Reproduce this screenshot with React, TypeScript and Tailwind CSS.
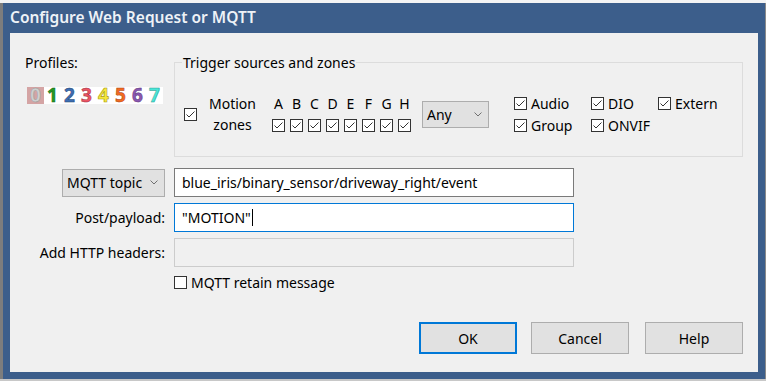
import React from "react";

function Check({ checked = true }: { checked?: boolean }) {
  return (
    <span className="flex h-[13px] w-[13px] shrink-0 items-center justify-center border border-[#333333] bg-white">
      {checked && (
        <svg width="11" height="11" viewBox="0 0 11 11" fill="none">
          <path d="M1.5 5.5 L4 8 L9.5 2.5" stroke="#333333" strokeWidth="1" />
        </svg>
      )}
    </span>
  );
}

function Chevron() {
  return (
    <svg width="8" height="5" viewBox="0 0 8 5" fill="none">
      <path d="M0.5 0.5 L4 4 L7.5 0.5" stroke="#707070" strokeWidth="1" />
    </svg>
  );
}

const zones = ["A", "B", "C", "D", "E", "F", "G", "H"];

const digits = [
  { d: "1", c: "text-[#239a23] [-webkit-text-stroke:0.5px_#16601a]" },
  { d: "2", c: "text-[#3d6db3] [-webkit-text-stroke:0.5px_#24456f]" },
  { d: "3", c: "text-[#ec5564] [-webkit-text-stroke:0.5px_#a03040]" },
  { d: "4", c: "text-[#f6e83c] [-webkit-text-stroke:0.6px_#a89a18]" },
  { d: "5", c: "text-[#f26a22] [-webkit-text-stroke:0.5px_#a84412]" },
  { d: "6", c: "text-[#8a58b0] [-webkit-text-stroke:0.5px_#5a3478]" },
  { d: "7", c: "text-[#4ae6d8] [-webkit-text-stroke:0.5px_#2a9a8e]" },
];

const sources = [
  ["Audio", "DIO", "Extern"],
  ["Group", "ONVIF"],
];

export default function App() {
  return (
    <div className="flex h-[381px] w-[766px] flex-col bg-[#f4f4f4] font-['Noto_Sans',sans-serif] text-[14px] text-black">
      <div className="h-[3px] shrink-0 bg-[#f4f4f4]" />
      <div className="flex flex-1">
        <div className="w-[3px] bg-[#7d7d7d]" />
        <div className="flex w-[762px] flex-col bg-[#3c5e8b] pb-[7px] pl-[7px] pr-[7px]">
          <div className="flex h-[30px] items-center text-[15.5px] font-semibold text-[#eef2f7]">
            Configure Web Request or MQTT
          </div>
          <div className="flex flex-1 flex-col bg-[#f0f0f0] pt-[20px]">
            {/* top row */}
            <div className="flex pl-[15px]">
              <div className="w-[149px]">
                <div className="leading-[19px]">Profiles:</div>
                <div className="ml-[2px] mt-[15px] flex h-[17px] w-[136px] bg-white text-[19px] font-bold leading-[17px]">
                  <span className="flex w-[17px] justify-center bg-[#d4a4a4] text-[#cfcfcf] [-webkit-text-stroke:0.5px_#999999]">
                    0
                  </span>
                  {digits.map((x) => (
                    <span key={x.d} className={"flex w-[17px] justify-center " + x.c}>
                      {x.d}
                    </span>
                  ))}
                </div>
              </div>

              <fieldset className="m-0 w-[569px] border border-[#dcdcdc] p-0">
                <legend className="ml-[7px] px-[1px] leading-[19px]">Trigger sources and zones</legend>
                <div className="flex h-[84px] items-center pl-[9px]">
                  <Check />
                  <div className="ml-[6px] w-[59px] text-center leading-[21px]">
                    Motion
                    <br />
                    zones
                  </div>
                  <div className="ml-[10px] flex gap-[5px]">
                    {zones.map((z) => (
                      <div key={z} className="flex w-[13px] flex-col items-center">
                        <span className="h-[16px] leading-[16px]">{z}</span>
                        <span className="mt-[7px]">
                          <Check />
                        </span>
                      </div>
                    ))}
                  </div>
                  <div className="ml-[11px] flex h-[27px] w-[67px] items-center justify-between border border-[#adadad] bg-[#e1e1e1] pl-[4px] pr-[6px]">
                    <span>Any</span>
                    <Chevron />
                  </div>
                  <div className="ml-[25px] grid grid-cols-[77px_67px_auto]">
                    {sources.map((row) =>
                      row.map((s) => (
                        <div key={s} className="flex h-[22px] items-center gap-[4px]">
                          <Check />
                          <span>{s}</span>
                        </div>
                      ))
                    )}
                  </div>
                </div>
              </fieldset>
            </div>

            {/* request rows */}
            <div className="mt-[11px] flex flex-col gap-[6px]">
              <div className="flex items-center">
                <div className="flex w-[155px] justify-end">
                  <div className="flex h-[28px] w-[103px] items-center justify-between border border-[#adadad] bg-[#e1e1e1] pl-[4px] pr-[6px]">
                    <span>MQTT topic</span>
                    <Chevron />
                  </div>
                </div>
                <div className="ml-[9px] flex h-[29px] w-[400px] items-center border border-[#7a7a7a] bg-white px-[7px]">
                  blue_iris/binary_sensor/driveway_right/event
                </div>
              </div>
              <div className="flex items-center">
                <div className="w-[155px] text-right">Post/payload:</div>
                <div className="ml-[9px] flex h-[29px] w-[400px] items-center border border-[#0078d7] bg-white px-[7px]">
                  "MOTION"
                  <span className="ml-px inline-block h-[17px] w-px bg-black" />
                </div>
              </div>
              <div className="flex items-center">
                <div className="w-[155px] text-right">Add HTTP headers:</div>
                <div className="ml-[9px] h-[29px] w-[400px] border border-[#cccccc] bg-[#f0f0f0]" />
              </div>
            </div>

            <div className="mt-[6px] flex items-center gap-[4px] pl-[164px] leading-[19px]">
              <Check checked={false} />
              <span>MQTT retain message</span>
            </div>

            <div className="mt-[30px] flex justify-end pr-[15px]">
              <button className="h-[32px] w-[98px] border-2 border-[#0078d7] bg-[#e1e1e1]">OK</button>
              <button className="ml-[14px] h-[32px] w-[98px] border border-[#adadad] bg-[#e1e1e1]">Cancel</button>
              <button className="ml-[16px] h-[32px] w-[98px] border border-[#adadad] bg-[#e1e1e1]">Help</button>
            </div>
          </div>
        </div>
        <div className="w-[1px] bg-[#8a8a8a]" />
      </div>
      <div className="h-[2px] bg-[#c8c8c8]" />
    </div>
  );
}
